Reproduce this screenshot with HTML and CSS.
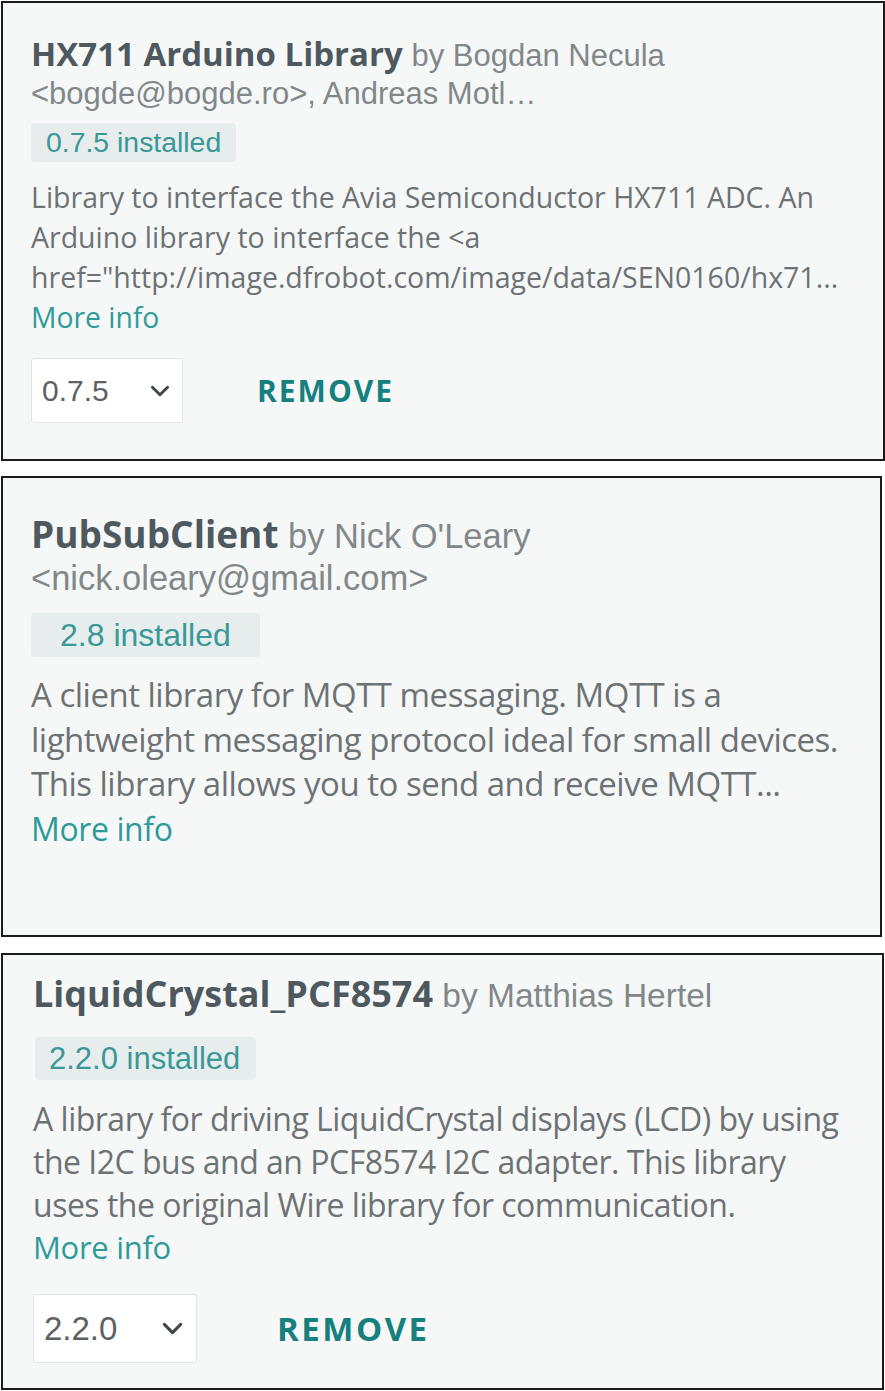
FILE: index.html
```html
<!DOCTYPE html>
<html lang="en">
<head>
<meta charset="utf-8">
<title>Libraries</title>
<link rel="stylesheet" href="styles.css">
</head>
<body>
<div class="page">
  <section class="card card-a">
    <div class="head"><span class="title">HX711 Arduino Library</span> <span class="author">by Bogdan Necula</span> <span class="author">&lt;bogde@bogde.ro&gt;, Andreas Motl…</span></div>
    <div class="badge">0.7.5 installed</div>
    <div class="desc">Library to interface the Avia Semiconductor HX711 ADC. An Arduino library to interface the &lt;a <span class="nowrap">href="http://image.dfrobot.com/image/data/SEN0160/hx71...</span></div>
    <a class="more" href="#">More info</a>
    <div class="actions">
      <div class="select"><span>0.7.5</span><svg class="chev" viewBox="0 0 18 11"><polyline points="2,2 9,9 16,2"/></svg></div>
      <span class="remove">REMOVE</span>
    </div>
  </section>

  <section class="card card-b">
    <div class="head"><span class="title">PubSubClient</span> <span class="author">by Nick O'Leary</span> <span class="author">&lt;nick.oleary@gmail.com&gt;</span></div>
    <div class="badge">2.8 installed</div>
    <div class="desc">A client library for MQTT messaging. MQTT is a lightweight messaging protocol ideal for small devices. This library allows you to send and receive MQTT...</div>
    <a class="more" href="#">More info</a>
  </section>

  <section class="card card-c">
    <div class="head"><span class="title">LiquidCrystal_PCF8574</span> <span class="author">by Matthias Hertel</span></div>
    <div class="badge">2.2.0 installed</div>
    <div class="desc">A library for driving LiquidCrystal displays (LCD) by using the I2C bus and an PCF8574 I2C adapter. This library uses the original Wire library for communication.</div>
    <a class="more" href="#">More info</a>
    <div class="actions">
      <div class="select"><span>2.2.0</span><svg class="chev" viewBox="0 0 18 11"><polyline points="2,2 9,9 16,2"/></svg></div>
      <span class="remove">REMOVE</span>
    </div>
  </section>
</div>
</body>
</html>
```
FILE: styles.css
```css
html, body {
  margin: 0;
  padding: 0;
  background: #ffffff;
}

.page {
  display: flex;
  flex-direction: column;
  align-items: flex-start;
  padding: 1px 0 0 1px;
}

.card {
  box-sizing: border-box;
  background: #f6f8f8;
  border: 2px solid #1b1b1b;
  display: flex;
  flex-direction: column;
  align-items: flex-start;
  padding-right: 20px;
  overflow: hidden;
}

.head {
  font-family: "Liberation Sans", Arial, sans-serif;
  font-size: var(--author);
  line-height: var(--head-lh);
  color: #82888a;
  align-self: stretch;
}

.title {
  font-family: "Open Sans", sans-serif;
  font-weight: 700;
  font-size: var(--title);
  line-height: 1;
  color: #4d595e;
}

.badge {
  font-family: "Liberation Sans", Arial, sans-serif;
  color: #3a9898;
  background: #e7eded;
  border-radius: 4px;
}

.desc {
  font-family: "Open Sans", sans-serif;
  color: #6d7274;
  align-self: stretch;
}

.nowrap {
  white-space: nowrap;
}

.more {
  font-family: "Open Sans", sans-serif;
  color: #2f9a9a;
  text-decoration: none;
}

.actions {
  display: flex;
  align-items: center;
}

.select {
  box-sizing: border-box;
  display: flex;
  align-items: center;
  justify-content: space-between;
  background: #ffffff;
  border: 1px solid #dfe4e4;
  border-radius: 3px;
  font-family: "Liberation Sans", Arial, sans-serif;
  color: #5d6163;
}

.chev {
  fill: none;
  stroke: #3f4446;
  stroke-width: 2.6;
  stroke-linecap: round;
  stroke-linejoin: round;
}

.remove {
  font-family: "Open Sans", sans-serif;
  font-weight: 700;
  color: #16807f;
}

/* card 1 */
.card-a {
  width: 884px;
  height: 460px;
  padding-top: 34px;
  padding-left: 28px;
  --title: 33px;
  --author: 31px;
  --head-lh: 38px;
}
.card-a .badge {
  margin-top: 10px;
  font-size: 28.4px;
  line-height: 39px;
  padding: 0 15px;
}
.card-a .desc {
  margin-top: 15px;
  font-size: 28.5px;
  line-height: 40px;
}
.card-a .more {
  font-size: 28.3px;
  line-height: 40px;
}
.card-a .actions {
  margin-top: 21px;
}
.card-a .select {
  width: 152px;
  height: 65px;
  padding: 0 12px 0 10px;
  font-size: 30px;
}
.card-a .chev {
  width: 20px;
  height: 12px;
}
.card-a .remove {
  margin-left: 74px;
  font-size: 30px;
  letter-spacing: 2px;
}

/* card 2 */
.card-b {
  width: 881px;
  height: 461px;
  margin-top: 15px;
  padding-top: 37px;
  padding-left: 28px;
  --title: 37px;
  --author: 34.5px;
  --head-lh: 42px;
}
.card-b .badge {
  margin-top: 14px;
  font-size: 32px;
  line-height: 44px;
  padding: 0 29px;
}
.card-b .desc {
  margin-top: 16px;
  font-size: 33px;
  line-height: 44.5px;
  letter-spacing: -0.5px;
}
.card-b .more {
  font-size: 32px;
  line-height: 44.5px;
  letter-spacing: -0.4px;
}

/* card 3 */
.card-c {
  width: 883px;
  height: 437px;
  margin-top: 16px;
  padding-top: 20px;
  padding-left: 30px;
  padding-right: 30px;
  --title: 36px;
  --author: 33.5px;
  --head-lh: 42px;
}
.card-c .badge {
  margin-top: 20px;
  margin-left: 2px;
  font-size: 31px;
  line-height: 43px;
  padding: 0 16px 0 14px;
}
.card-c .desc {
  margin-top: 16.5px;
  font-size: 32px;
  line-height: 43px;
  letter-spacing: -0.5px;
}
.card-c .more {
  font-size: 31px;
  line-height: 43px;
  letter-spacing: -0.3px;
}
.card-c .actions {
  margin-top: 25.5px;
}
.card-c .select {
  width: 164px;
  height: 69px;
  padding: 0 13px 0 10px;
  font-size: 33px;
}
.card-c .chev {
  width: 21px;
  height: 13px;
}
.card-c .remove {
  margin-left: 80px;
  font-size: 33px;
  letter-spacing: 2.5px;
}
```
